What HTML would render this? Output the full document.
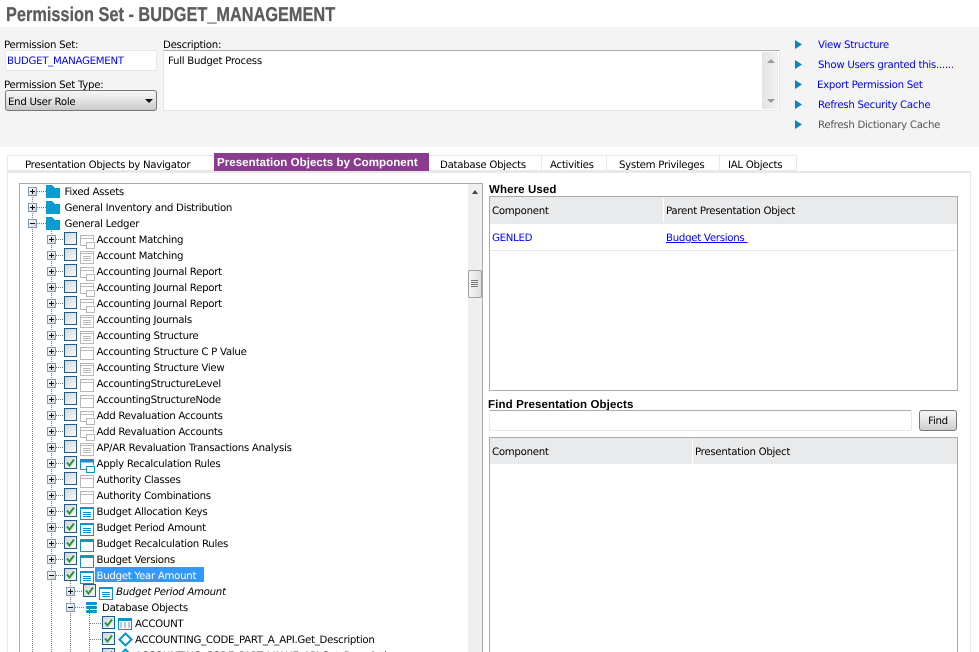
<!DOCTYPE html>
<html><head><meta charset="utf-8"><title>Permission Set</title>
<style>
html,body{margin:0;padding:0;width:979px;height:652px;overflow:hidden;background:#fff}
body{position:relative;font:10.2px/16px "DejaVu Sans",sans-serif;color:#000;text-rendering:geometricPrecision;letter-spacing:-.28px}
.a{position:absolute;box-sizing:border-box;white-space:nowrap}
.title{left:6px;top:4px;font:bold 20px/22px "Liberation Sans",sans-serif;color:#5c5c5c;transform-origin:0 0;transform:scaleX(.816);-webkit-text-stroke:.3px #5c5c5c;letter-spacing:0}
.tab{top:155px;height:17px;border:1px solid #e8e8e8;border-bottom:2px solid #e8e8e8;background:#fff;line-height:20px;border-left:0;overflow:hidden}
.bd{font:bold 11.5px/16px "Liberation Sans",sans-serif}
.h{background:#e9eaec}
a{color:#00f}
svg{position:absolute;left:0;top:0}
svg text{font:10.2px "DejaVu Sans",sans-serif;fill:#000;text-rendering:geometricPrecision;letter-spacing:-.28px}
</style></head><body>
<div class="a title">Permission Set - BUDGET_MANAGEMENT</div>
<div class="a" style="left:0;top:27px;width:979px;height:120px;background:#f4f4f4"></div>
<div class="a" style="left:4px;top:38px">Permission Set:</div>
<div class="a" style="left:5px;top:50px;width:152px;height:21px;background:#fff;border:1px solid #e3e7ee;border-radius:2px;color:#00f;padding-left:1px;line-height:22px">BUDGET_MANAGEMENT</div>
<div class="a" style="left:4px;top:78px">Permission Set Type:</div>
<div class="a" style="left:5px;top:90px;width:152px;height:21px;border:1px solid #767676;border-radius:3px;background:linear-gradient(#f6f6f6,#e6e6e6 45%,#c9c9c9);padding-left:2px;line-height:23px">End User Role</div>
<div class="a" style="left:145px;top:99px;width:0;height:0;border:4px solid transparent;border-top:4px solid #111;border-bottom:0"></div>
<div class="a" style="left:163px;top:38px">Description:</div>
<div class="a" style="left:163px;top:50px;width:617px;height:61px;background:#fff;border:1px solid #e3e7ee;border-top-color:#aaaab2;padding:3px 0 0 4px;line-height:16px">Full Budget Process</div>
<div class="a" style="left:762px;top:52px;width:16px;height:57px;background:linear-gradient(90deg,#e4e4e4,#f1f1f1)"></div>
<div class="a" style="left:767px;top:59px;width:0;height:0;border:4px solid transparent;border-bottom:4px solid #999;border-top:0"></div>
<div class="a" style="left:767px;top:99px;width:0;height:0;border:4px solid transparent;border-top:4px solid #999;border-bottom:0"></div>

<div class="a" style="left:818px;top:38px;color:#00f">View Structure</div>
<div class="a" style="left:818px;top:58px;color:#00f">Show Users granted this......</div>
<div class="a" style="left:817px;top:78px;color:#00f">Export Permission Set</div>
<div class="a" style="left:818px;top:98px;color:#00f">Refresh Security Cache</div>
<div class="a" style="left:818px;top:118px;color:#555">Refresh Dictionary Cache</div>

<div class="a" style="left:7px;top:171px;width:964px;height:490px;border:1px solid #e8e8e8;border-top-width:2px"></div>
<div class="a tab" style="left:7px;width:208px;border-left:1px solid #e8e8e8;padding-left:17px">Presentation Objects by Navigator</div>
<div class="a tab" style="left:429px;width:113px;padding-left:11px">Database Objects</div>
<div class="a tab" style="left:542px;width:65px;padding-left:8px">Activities</div>
<div class="a tab" style="left:607px;width:113px;padding-left:12px">System Privileges</div>
<div class="a tab" style="left:720px;width:77px;padding-left:8px">IAL Objects</div>
<div class="a bd" style="left:214px;top:153px;width:215px;height:18px;background:#8a3d8f;color:#fff;padding-left:3px;line-height:20px;letter-spacing:.06px;overflow:hidden">Presentation Objects by Component</div>

<div class="a" style="left:19px;top:183px;width:464px;height:480px;border:1px solid #aaaab0;background:#fff"></div>
<div class="a" style="left:468px;top:184px;width:14px;height:470px;background:#efefef"></div>
<div class="a" style="left:472px;top:190px;width:0;height:0;border:3.5px solid transparent;border-bottom:4px solid #444;border-top:0"></div>
<div class="a" style="left:468px;top:270px;width:14px;height:28px;border:1px solid #a0a0a0;border-radius:2px;background:linear-gradient(90deg,#f6f6f6,#dcdcdc)"></div>
<div class="a" style="left:471px;top:280px;width:7px;height:8px;background:repeating-linear-gradient(#777 0,#777 1px,#ececec 1px,#ececec 2px)"></div>

<div class="a bd" style="left:489px;top:182px;letter-spacing:.1px">Where Used</div>
<div class="a" style="left:489px;top:196px;width:469px;height:195px;border:1px solid #aaaab0;background:#fff"></div>
<div class="a h" style="left:490px;top:197px;width:467px;height:27px"></div>
<div class="a" style="left:663px;top:198px;width:1px;height:24px;background:#fff"></div>
<div class="a" style="left:492px;top:204px">Component</div>
<div class="a" style="left:666px;top:204px">Parent Presentation Object</div>
<div class="a" style="left:492px;top:231px;color:#00f">GENLED</div>
<div class="a" style="left:666px;top:231px;color:#00f;text-decoration:underline">Budget Versions&nbsp;</div>
<div class="a" style="left:490px;top:250px;width:467px;height:1px;background:#e8e8e8"></div>

<div class="a bd" style="left:488px;top:397px;letter-spacing:.12px">Find Presentation Objects</div>
<div class="a" style="left:489px;top:410px;width:423px;height:21px;background:#fff;border:1px solid #e3e7ee;border-top-color:#aaaab2;border-radius:2px"></div>
<div class="a" style="left:919px;top:410px;width:38px;height:21px;border:1px solid #767676;border-radius:3px;background:linear-gradient(#f6f6f6,#e6e6e6 45%,#cdcdcd);text-align:center;line-height:22px">Find</div>
<div class="a" style="left:489px;top:437px;width:469px;height:225px;border:1px solid #aaaab0;background:#fff"></div>
<div class="a h" style="left:490px;top:438px;width:467px;height:26px"></div>
<div class="a" style="left:692px;top:439px;width:1px;height:24px;background:#fff"></div>
<div class="a" style="left:492px;top:445px">Component</div>
<div class="a" style="left:695px;top:445px">Presentation Object</div>

<svg width="979" height="652" viewBox="0 0 979 652" xmlns="http://www.w3.org/2000/svg">
<defs>
<linearGradient id="bx" x1="0" y1="0" x2="1" y2="1"><stop offset="0" stop-color="#fff"/><stop offset="1" stop-color="#cfcfcf"/></linearGradient>
<linearGradient id="cb" x1="0" y1="0" x2="1" y2="1"><stop offset="0" stop-color="#d4d4d4"/><stop offset="1" stop-color="#fafafa"/></linearGradient>
<symbol id="p" width="9" height="9" overflow="visible"><rect x=".5" y=".5" width="8" height="8" fill="url(#bx)" stroke="#7c9ab8"/><path d="M2 4.500H7M4.500 2V7" stroke="#111" fill="none"/></symbol>
<symbol id="m" width="9" height="9" overflow="visible"><rect x=".5" y=".5" width="8" height="8" fill="url(#bx)" stroke="#7c9ab8"/><path d="M2 4.500H7" stroke="#111" fill="none"/></symbol>
<symbol id="u" width="13" height="13"><rect x=".5" y=".5" width="12" height="12" fill="url(#cb)" stroke="#1f5a8f"/></symbol>
<symbol id="c" width="13" height="13"><rect x=".5" y=".5" width="12" height="12" fill="url(#cb)" stroke="#1f5a8f"/><path d="M3 6.500L5.500 9.500L10 3.500" fill="none" stroke="#27983a" stroke-width="2"/></symbol>

<symbol id="Ag" width="15" height="14"><path d="M.5 10.500V.5H13.500V6M.5 3.500H13.500M.5 10.500H6" fill="none" stroke="#b8b8b8"/><rect x="6.500" y="7.500" width="8" height="6" fill="#fff" stroke="#b8b8b8"/></symbol>
<symbol id="Bg" width="15" height="14"><rect x=".5" y=".5" width="13" height="12" fill="#fff" stroke="#b8b8b8"/><path d="M.5 2.500H13.500M3 5.500H11M3 7.500H11M3 9.500H11" fill="none" stroke="#b8b8b8"/></symbol>
<symbol id="Cg" width="15" height="14"><rect x=".5" y=".5" width="13" height="12" fill="#fff" stroke="#b8b8b8"/><path d="M.5 3.500H13.500" fill="none" stroke="#b8b8b8"/></symbol>
<symbol id="Ab" width="15" height="14"><path d="M.5 10.500V.5H13.500V6M.5 3H13.500M.5 10.500H6" fill="none" stroke="#0a94cc"/><path d="M0 0H14V3H0Z" fill="#0a94cc"/><rect x="6.500" y="7.500" width="8" height="6" fill="#fff" stroke="#0a94cc"/></symbol>
<symbol id="Bb" width="15" height="14"><rect x=".5" y=".5" width="13" height="12" fill="#fff" stroke="#0a94cc"/><path d="M0 0H14V2H0Z" fill="#0a94cc"/><path d="M3 5.500H11M3 7.500H11M3 9.500H11" fill="none" stroke="#0a94cc"/></symbol>
<symbol id="Cb" width="15" height="14"><rect x=".5" y=".5" width="13" height="12" fill="#fff" stroke="#0a94cc"/><path d="M0 0H14V3H0Z" fill="#0a94cc"/></symbol>

<symbol id="F" width="14" height="13"><path d="M0 0H6L9 3H14V13H0Z" fill="#0a9bd0"/></symbol>
<symbol id="D" width="12" height="11"><path d="M1 0H10Q11 0 11 1V2Q11 3 10 3H1Q0 3 0 2V1Q0 0 1 0ZM1 4H10Q11 4 11 5V6Q11 7 10 7H1Q0 7 0 6V5Q0 4 1 4ZM1 8H10Q11 8 11 9V10Q11 11 10 11H1Q0 11 0 10V9Q0 8 1 8Z" fill="#0a94cc"/></symbol>
<symbol id="T" width="15" height="13"><rect width="14" height="12" y="0" fill="#0a94cc"/><path d="M1.500 3.500h3v7h-3zM5.500 3.500h3v7h-3zM9.500 3.500h3v7h-3z" fill="#c8c8c8" stroke="#fff"/></symbol>
<symbol id="X" width="16" height="15"><path d="M7.500 1.500L13.500 7.500L7.500 13.500L1.500 7.500Z" fill="#fff" stroke="#0a94cc" stroke-width="2"/></symbol>
<symbol id="R" width="8" height="9"><path d="M0 0L7 4.500L0 9Z" fill="#0a84c1"/></symbol>
</defs>

<g><use href="#R" x="795" y="40"/><use href="#R" x="795" y="60"/><use href="#R" x="795" y="80"/><use href="#R" x="795" y="100"/><use href="#R" x="795" y="120"/></g>

<rect x="95" y="567" width="109" height="15" fill="#3399ff"/>

<path d="M32.500 191V652M51.500 223V652M70.500 575V652M89.500 607V652" stroke="#7a7a7a" stroke-dasharray="1 1" fill="none"/>
<path d="M37 191.500H46M37 207.500H46M37 223.500H46M90 623.500H102M90 639.500H102M75 591.500H83M75 607.500H85" stroke="#7a7a7a" stroke-dasharray="1 1" fill="none"/>
<path d="M56 239.500H64M56 255.500H64M56 271.500H64M56 287.500H64M56 303.500H64M56 319.500H64M56 335.500H64M56 351.500H64M56 367.500H64M56 383.500H64M56 399.500H64M56 415.500H64M56 431.500H64M56 447.500H64M56 463.500H64M56 479.500H64M56 495.500H64M56 511.500H64M56 527.500H64M56 543.500H64M56 559.500H64M56 575.500H64" stroke="#7a7a7a" stroke-dasharray="1 1" fill="none"/>

<g transform="translate(0,191)"><use href="#p" x="28" y="-4"/><use href="#F" x="46" y="-6"/><text x="64.500" y="4">Fixed Assets</text></g>
<g transform="translate(0,207)"><use href="#p" x="28" y="-4"/><use href="#F" x="46" y="-6"/><text x="64.500" y="4">General Inventory and Distribution</text></g>
<g transform="translate(0,223)"><use href="#m" x="28" y="-4"/><use href="#F" x="46" y="-6"/><text x="64.500" y="4">General Ledger</text></g>

<g transform="translate(0,239)"><use href="#p" x="47" y="-4"/><use href="#u" x="64" y="-7"/><use href="#Ag" x="80" y="-4"/><text x="96.500" y="4">Account Matching</text></g>
<g transform="translate(0,255)"><use href="#p" x="47" y="-4"/><use href="#u" x="64" y="-7"/><use href="#Bg" x="80" y="-4"/><text x="96.500" y="4">Account Matching</text></g>
<g transform="translate(0,271)"><use href="#p" x="47" y="-4"/><use href="#u" x="64" y="-7"/><use href="#Ag" x="80" y="-4"/><text x="96.500" y="4">Accounting Journal Report</text></g>
<g transform="translate(0,287)"><use href="#p" x="47" y="-4"/><use href="#u" x="64" y="-7"/><use href="#Ag" x="80" y="-4"/><text x="96.500" y="4">Accounting Journal Report</text></g>
<g transform="translate(0,303)"><use href="#p" x="47" y="-4"/><use href="#u" x="64" y="-7"/><use href="#Ag" x="80" y="-4"/><text x="96.500" y="4">Accounting Journal Report</text></g>
<g transform="translate(0,319)"><use href="#p" x="47" y="-4"/><use href="#u" x="64" y="-7"/><use href="#Bg" x="80" y="-4"/><text x="96.500" y="4">Accounting Journals</text></g>
<g transform="translate(0,335)"><use href="#p" x="47" y="-4"/><use href="#u" x="64" y="-7"/><use href="#Bg" x="80" y="-4"/><text x="96.500" y="4">Accounting Structure</text></g>
<g transform="translate(0,351)"><use href="#p" x="47" y="-4"/><use href="#u" x="64" y="-7"/><use href="#Cg" x="80" y="-4"/><text x="96.500" y="4">Accounting Structure C P Value</text></g>
<g transform="translate(0,367)"><use href="#p" x="47" y="-4"/><use href="#u" x="64" y="-7"/><use href="#Bg" x="80" y="-4"/><text x="96.500" y="4">Accounting Structure View</text></g>
<g transform="translate(0,383)"><use href="#p" x="47" y="-4"/><use href="#u" x="64" y="-7"/><use href="#Cg" x="80" y="-4"/><text x="96.500" y="4">AccountingStructureLevel</text></g>
<g transform="translate(0,399)"><use href="#p" x="47" y="-4"/><use href="#u" x="64" y="-7"/><use href="#Cg" x="80" y="-4"/><text x="96.500" y="4">AccountingStructureNode</text></g>
<g transform="translate(0,415)"><use href="#p" x="47" y="-4"/><use href="#u" x="64" y="-7"/><use href="#Ag" x="80" y="-4"/><text x="96.500" y="4">Add Revaluation Accounts</text></g>
<g transform="translate(0,431)"><use href="#p" x="47" y="-4"/><use href="#u" x="64" y="-7"/><use href="#Ag" x="80" y="-4"/><text x="96.500" y="4">Add Revaluation Accounts</text></g>
<g transform="translate(0,447)"><use href="#p" x="47" y="-4"/><use href="#u" x="64" y="-7"/><use href="#Bg" x="80" y="-4"/><text x="96.500" y="4">AP/AR Revaluation Transactions Analysis</text></g>
<g transform="translate(0,463)"><use href="#p" x="47" y="-4"/><use href="#c" x="64" y="-7"/><use href="#Ab" x="80" y="-4"/><text x="96.500" y="4">Apply Recalculation Rules</text></g>
<g transform="translate(0,479)"><use href="#p" x="47" y="-4"/><use href="#u" x="64" y="-7"/><use href="#Cg" x="80" y="-4"/><text x="96.500" y="4">Authority Classes</text></g>
<g transform="translate(0,495)"><use href="#p" x="47" y="-4"/><use href="#u" x="64" y="-7"/><use href="#Cg" x="80" y="-4"/><text x="96.500" y="4">Authority Combinations</text></g>
<g transform="translate(0,511)"><use href="#p" x="47" y="-4"/><use href="#c" x="64" y="-7"/><use href="#Bb" x="80" y="-4"/><text x="96.500" y="4">Budget Allocation Keys</text></g>
<g transform="translate(0,527)"><use href="#p" x="47" y="-4"/><use href="#c" x="64" y="-7"/><use href="#Bb" x="80" y="-4"/><text x="96.500" y="4">Budget Period Amount</text></g>
<g transform="translate(0,543)"><use href="#p" x="47" y="-4"/><use href="#c" x="64" y="-7"/><use href="#Cb" x="80" y="-4"/><text x="96.500" y="4">Budget Recalculation Rules</text></g>
<g transform="translate(0,559)"><use href="#p" x="47" y="-4"/><use href="#c" x="64" y="-7"/><use href="#Cb" x="80" y="-4"/><text x="96.500" y="4">Budget Versions</text></g>
<g transform="translate(0,575)"><use href="#m" x="47" y="-4"/><use href="#c" x="64" y="-7"/><use href="#Bb" x="80" y="-4"/><text x="96.500" y="4" style="fill:#fff">Budget Year Amount</text></g>

<g transform="translate(0,591)"><use href="#p" x="66" y="-4"/><use href="#c" x="83" y="-7"/><use href="#Bb" x="99" y="-4"/><text x="116" y="4" style="font-style:italic">Budget Period Amount</text></g>
<g transform="translate(0,607)"><use href="#m" x="66" y="-4"/><use href="#D" x="86" y="-5"/><text x="102" y="4">Database Objects</text></g>
<g transform="translate(0,623)"><use href="#c" x="102" y="-7"/><use href="#T" x="118" y="-5"/><text x="135" y="4">ACCOUNT</text></g>
<g transform="translate(0,639)"><use href="#c" x="102" y="-7"/><use href="#X" x="118" y="-7"/><text x="135" y="4">ACCOUNTING_CODE_PART_A_API.Get_Description</text></g>
<g transform="translate(0,655)"><use href="#c" x="102" y="-7"/><use href="#X" x="118" y="-7"/><text x="135" y="4">ACCOUNTING_CODE_PART_VALUE_API.Get_Description</text></g>
</svg>
</body></html>
